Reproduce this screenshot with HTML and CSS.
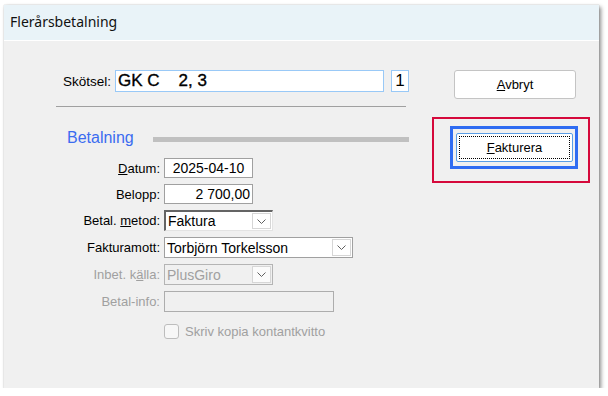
FILE: index.html
```html
<!DOCTYPE html>
<html lang="sv">
<head>
<meta charset="utf-8">
<title>Flerårsbetalning</title>
<link rel="stylesheet" href="styles.css">
</head>
<body>
<div class="window">
  <div class="titlebar">Flerårsbetalning</div>
  <div class="content">
    <div class="form">
      <div class="skotsel-row">
        <span class="lbl">Skötsel:</span>
        <div class="field skotsel-input">GK C    2, 3</div>
        <div class="field num-box">1</div>
      </div>
      <div class="divider"></div>
      <div class="section-head">
        <span class="section-title">Betalning</span>
        <span class="section-bar"></span>
      </div>
      <div class="grid">
        <span class="lbl"><u>D</u>atum:</span>
        <div class="field w89 center">2025-04-10</div>

        <span class="lbl">Belopp:</span>
        <div class="field w89 right">2 700,00</div>

        <span class="lbl">Betal. <u>m</u>etod:</span>
        <div class="combo w109 focused"><span class="combo-text">Faktura</span><span class="drop"><svg width="9" height="5" viewBox="0 0 9 5"><path d="M0.5 0.5 L4.5 4.5 L8.5 0.5" fill="none" stroke="#606060" stroke-width="1"/></svg></span></div>

        <span class="lbl">Fakturamott:</span>
        <div class="combo w189"><span class="combo-text">Torbjörn Torkelsson</span><span class="drop"><svg width="9" height="5" viewBox="0 0 9 5"><path d="M0.5 0.5 L4.5 4.5 L8.5 0.5" fill="none" stroke="#606060" stroke-width="1"/></svg></span></div>

        <span class="lbl disabled">Inbet. k<u>ä</u>lla:</span>
        <div class="combo w109 is-disabled"><span class="combo-text">PlusGiro</span><span class="drop"><svg width="9" height="5" viewBox="0 0 9 5"><path d="M0.5 0.5 L4.5 4.5 L8.5 0.5" fill="none" stroke="#606060" stroke-width="1"/></svg></span></div>

        <span class="lbl disabled">Betal-info:</span>
        <div class="field w170 is-disabled"></div>

        <span></span>
        <div class="check-row"><span class="checkbox"></span><span class="check-text">Skriv kopia kontantkvitto</span></div>
      </div>
    </div>
    <div class="actions">
      <button class="btn avbryt"><u>A</u>vbryt</button>
      <div class="frame-red">
        <div class="frame-blue">
          <button class="btn fakturera"><span class="focus-ring"><u>F</u>akturera</span></button>
        </div>
      </div>
    </div>
  </div>
</div>
</body>
</html>
```

FILE: styles.css
```css
* { box-sizing: border-box; }
html, body { margin: 0; padding: 0; background: #ffffff; }
body {
  font-family: "Liberation Sans", Arial, sans-serif;
  font-size: 13px;
  color: #000;
}
.window {
  margin: 5px 0 0 4px;
  width: 595px;
  height: 383px;
  background: #f0f0f0;
  box-shadow: 2px 2px 4px rgba(0,0,0,0.45), 0 0 1px rgba(0,0,0,0.25);
  display: flex;
  flex-direction: column;
}
.titlebar {
  height: 36px;
  background: #e9f3f8;
  border-bottom: 1px solid #ffffff;
  padding-left: 6px;
  line-height: 34px;
  font-family: "Noto Sans", "Open Sans", sans-serif;
  font-size: 14px;
  color: #111;
}
.content {
  display: flex;
  flex: 1;
}
.form {
  margin-left: 52px;
  width: 353px;
  padding-top: 29px;
}
.skotsel-row {
  display: flex;
  align-items: center;
  padding-left: 7px;
}
.skotsel-row .lbl { margin-right: 4px; font-size: 13.5px; }
.field {
  background: #fff;
  border: 1px solid #a0a0a0;
  height: 20px;
  line-height: 18px;
  padding: 0 3px;
  white-space: pre;
}
.skotsel-input {
  width: 269px;
  height: 22px;
  line-height: 20px;
  border-color: #99c9f7;
  font-size: 17px;
  -webkit-text-stroke: 0.35px #000;
  padding-left: 2px;
}
.num-box {
  margin-left: 7px;
  width: 18px;
  height: 22px;
  line-height: 20px;
  border-color: #99c9f7;
  font-size: 17px;
  text-align: center;
  padding: 0;
}
.divider {
  margin-top: 14px;
  width: 350px;
  border-top: 1px solid #a0a0a0;
}
.section-head {
  margin-top: 21px;
  display: flex;
  align-items: center;
  height: 20px;
  padding-left: 11px;
}
.section-title {
  color: #3b6cf0;
  font-size: 16px;
  width: 86px;
}
.section-bar {
  width: 256px;
  height: 5px;
  background: #c0c0c0;
  margin-top: 2px;
}
.grid {
  margin-top: 10px;
  display: grid;
  grid-template-columns: 104px auto;
  column-gap: 4px;
  row-gap: 6px;
  align-items: center;
  justify-items: start;
}
.grid .lbl { justify-self: end; }
.lbl.disabled { color: #a0a0a0; }
.w89 { width: 89px; }
.w109 { width: 109px; }
.w170 { width: 170px; height: 21px; }
.w189 { width: 189px; }
.center { text-align: center; font-size: 14px; }
.right { text-align: right; padding-right: 2px; font-size: 14px; }
.field.is-disabled {
  background: #f0f0f0;
  border-color: #adadad;
}
.combo {
  height: 21px;
  background: #fff;
  border: 1px solid #a0a0a0;
  display: flex;
  align-items: center;
  justify-content: space-between;
  padding: 1px;
}
.combo.focused {
  border-color: #646464 #e3e3e3 #e3e3e3 #646464;
  border-width: 2px 1px 1px 2px;
}
.combo-text { padding-left: 1px; font-size: 14px; }
.drop {
  width: 19px;
  height: 100%;
  background: #fff;
  border: 1px solid #d6d6d6;
  display: flex;
  align-items: center;
  justify-content: center;
}
.combo.is-disabled {
  background: #f0f0f0;
  border-color: #b4b4b4;
  color: #a0a0a0;
}
.combo.is-disabled .drop { background: #fbfbfb; }
.check-row {
  display: flex;
  align-items: center;
  margin-top: 6px;
}
.checkbox {
  width: 15px;
  height: 15px;
  border: 1px solid #bdbdbd;
  border-radius: 3px;
  background: #f7f7f7;
  margin-right: 6px;
}
.check-text { color: #a0a0a0; font-size: 13px; }
.actions {
  margin-left: 23px;
  padding-top: 29px;
  display: flex;
  flex-direction: column;
  align-items: flex-start;
}
.btn {
  font-family: "Liberation Sans", Arial, sans-serif;
  font-size: 13px;
  color: #000;
  background: #fff;
  padding: 0;
}
.avbryt {
  margin-left: 22px;
  width: 122px;
  height: 29px;
  border: 1px solid #c4c4c4;
  border-radius: 3px;
}
.frame-red {
  margin-top: 18px;
  width: 158px;
  height: 66px;
  border: 2px solid #d5093b;
  padding: 7px 0 0 16px;
}
.frame-blue {
  width: 128px;
  height: 43px;
  border: 3px solid #2f6cf2;
  padding: 4px 0 0 3px;
}
.fakturera {
  width: 117px;
  height: 29px;
  border: 1px solid #5a9ee6;
  border-radius: 2px;
  padding: 2px;
}
.focus-ring {
  display: flex;
  align-items: center;
  justify-content: center;
  width: 100%;
  height: 100%;
  border: 1px dotted #000;
}
```
